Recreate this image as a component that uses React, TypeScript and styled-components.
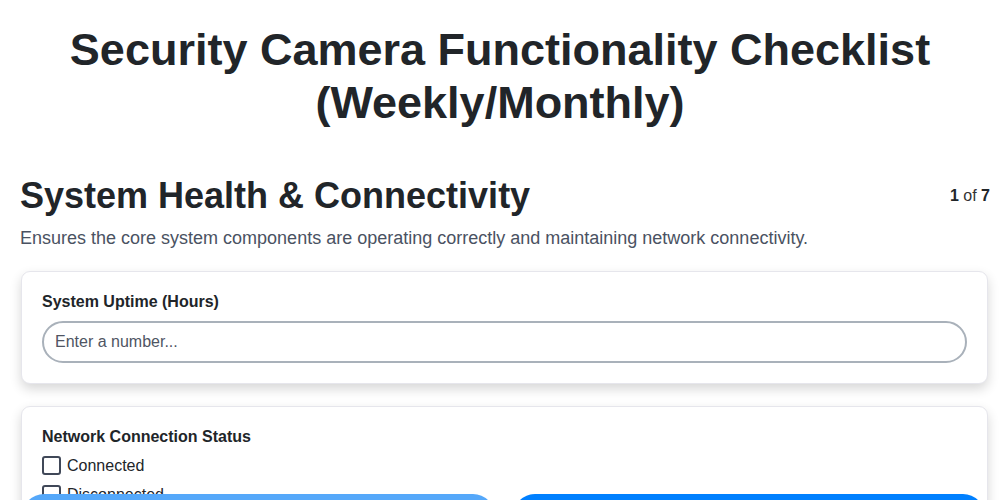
import React from 'react';
import styled, { createGlobalStyle } from 'styled-components';

const GlobalStyle = createGlobalStyle`
  * {
    box-sizing: border-box;
  }
  body {
    margin: 0;
    background: #ffffff;
    font-family: 'Liberation Sans', Arial, sans-serif;
    color: #212529;
  }
`;

export const Page = styled.div`
  padding: 23px 12px 80px 20px;
`;

export const Title = styled.h1`
  margin: 0 4px 45px -4px;
  text-align: center;
  font-size: 45px;
  line-height: 53px;
  font-weight: 700;
  color: #212529;
`;

export const SectionHead = styled.div`
  display: flex;
  align-items: center;
  justify-content: space-between;
  margin-right: -2px;
`;

export const SectionTitle = styled.h2`
  margin: 0;
  font-size: 36px;
  line-height: 44px;
  font-weight: 700;
`;

export const Counter = styled.span`
  font-size: 16px;
  color: #333;
  b {
    color: #212529;
  }
`;

export const Description = styled.p`
  margin: 8px 0 21px;
  font-size: 18px;
  line-height: 24px;
  color: #4a5262;
`;

export const Card = styled.div`
  background: #fff;
  border: 1px solid #e6e6ec;
  border-radius: 9px;
  box-shadow: 0 5px 12px rgba(0, 0, 0, 0.16);
  padding: 20px;
  margin-bottom: 22px;
  margin-left: 1px;
`;

export const Label = styled.div`
  font-size: 16px;
  font-weight: 700;
  line-height: 20px;
  margin-bottom: 9px;
`;

export const Input = styled.input`
  width: 100%;
  height: 42px;
  border: 2px solid #a9b1ba;
  border-radius: 21px;
  padding: 0 11px;
  font-family: 'Liberation Sans', Arial, sans-serif;
  font-size: 16px;
  color: #212529;
  outline: none;
  &::placeholder {
    color: #4f5563;
  }
`;

export const Options = styled.div`
  display: flex;
  flex-direction: column;
  gap: 10px;
`;

export const Option = styled.label`
  display: flex;
  align-items: center;
  gap: 6px;
  font-size: 16px;
  line-height: 19px;
  color: #212529;
`;

export const Box = styled.span`
  width: 19px;
  height: 19px;
  border: 2px solid #404858;
  border-radius: 3px;
  background: #fff;
`;

export const Footer = styled.div`
  position: fixed;
  left: 22px;
  right: 15px;
  bottom: -40px;
  display: flex;
  gap: 18px;
`;

export const NavButton = styled.button<{ $primary?: boolean }>`
  flex: 1;
  height: 46px;
  border: none;
  border-radius: 22px;
  background: ${({ $primary }) => ($primary ? '#0080ff' : '#55a8fa')};
  color: #fff;
  font-family: 'Liberation Sans', Arial, sans-serif;
  font-size: 16px;
`;

const App = (): JSX.Element => {
  return (
    <>
      <GlobalStyle />
      <Page>
        <Title>
          Security Camera Functionality Checklist
          <br />
          (Weekly/Monthly)
        </Title>
        <SectionHead>
          <SectionTitle>System Health &amp; Connectivity</SectionTitle>
          <Counter>
            <b>1</b> of <b>7</b>
          </Counter>
        </SectionHead>
        <Description>
          Ensures the core system components are operating correctly and maintaining network connectivity.
        </Description>
        <Card>
          <Label>System Uptime (Hours)</Label>
          <Input type="number" placeholder="Enter a number..." />
        </Card>
        <Card>
          <Label>Network Connection Status</Label>
          <Options>
            <Option>
              <Box />
              Connected
            </Option>
            <Option>
              <Box />
              Disconnected
            </Option>
            <Option>
              <Box />
              Intermittent
            </Option>
          </Options>
        </Card>
      </Page>
      <Footer>
        <NavButton>Previous</NavButton>
        <NavButton $primary>Next</NavButton>
      </Footer>
    </>
  );
};

export default App;
